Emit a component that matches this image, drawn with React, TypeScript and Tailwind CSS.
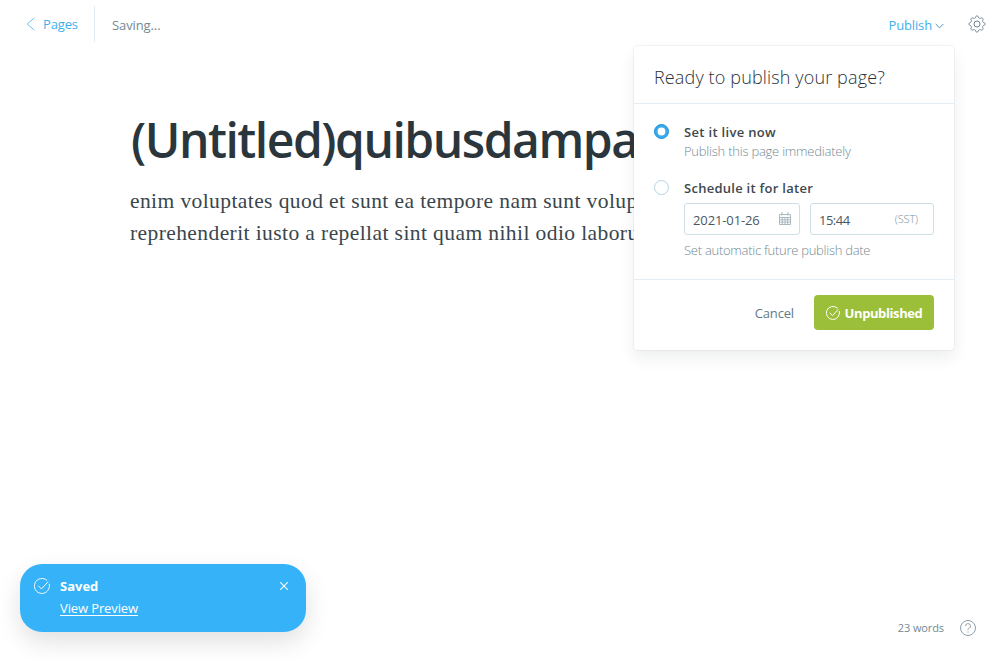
import type { ReactNode } from "react";

function CheckCircle({ className }: { className: string }) {
  return (
    <svg viewBox="0 0 24 24" fill="none" stroke="currentColor" strokeLinecap="round" strokeLinejoin="round" className={className}>
      <path d="M6.8 12l4.4 4.4L20.8 6" />
      <path d="M19.4 3.4A11.3 11.3 0 1 0 22.9 9.2" />
    </svg>
  );
}

const gearOutline = Array.from({ length: 128 }, (_, i) => {
  const angle = (i / 128) * Math.PI * 2;
  const radius = 7.1 + 0.9 * Math.tanh(2 * Math.cos(angle * 8));
  return `${(9 + radius * Math.sin(angle)).toFixed(2)},${(9 - radius * Math.cos(angle)).toFixed(2)}`;
}).join(" ");

function Gear() {
  return (
    <svg viewBox="0 0 18 18" fill="none" stroke="#6f8793" strokeLinejoin="round" className="size-[18px] shrink-0">
      <polygon points={gearOutline} />
      <circle cx="9" cy="9" r="3" />
    </svg>
  );
}

function Calendar() {
  return (
    <svg viewBox="0 0 12 13" fill="none" stroke="#a3b3bb" className="mb-px h-[13px] w-3">
      <path d="M.5 2.5h11v10H.5zM.5 5.5h11M.5 7.8h11M.5 10.1h11M3.3 5v7.5M6 5v7.5M8.7 5v7.5M3 0v3.5M9 0v3.5" strokeWidth="0.9" />
    </svg>
  );
}

function Radio({ checked }: { checked?: boolean }) {
  return (
    <svg viewBox="0 0 15 15" className="mt-0.5 mr-[15px] size-[15px] shrink-0">
      {checked ? (
        <>
          <circle cx="7.5" cy="7.5" r="7" fill="#3aa9e9" stroke="#1c95dc" />
          <circle cx="7.5" cy="7.5" r="3.9" fill="white" />
        </>
      ) : (
        <circle cx="7.5" cy="7.5" r="7" fill="white" stroke="#b4d3e5" />
      )}
    </svg>
  );
}

function Input({ children, className }: { children: ReactNode; className: string }) {
  return (
    <div className={`flex h-8 items-center justify-between rounded-[3px] border border-[#cfdfe8] pl-2 text-[13px] text-[#4c585f] ${className}`}>
      {children}
    </div>
  );
}

function PublishMenu() {
  return (
    <div className="absolute top-[46px] left-[634px] h-[304px] w-80 rounded-[4px] bg-white shadow-[0_0_0_1px_rgba(99,114,130,0.08),0_8px_16px_rgba(27,39,51,0.08)]">
      <div className="flex h-[58px] items-center border-b border-[#e3edf3] px-5 pt-1">
        <h2 className="text-[18px] leading-6 font-[350] tracking-[0.14px] whitespace-nowrap text-[#28343a]">Ready to publish your page?</h2>
      </div>
      <div className="h-[176px] border-b border-[#e3edf3] px-5 pt-[18px]">
        <div className="flex h-14">
          <Radio checked />
          <div className="whitespace-nowrap">
            <div className="text-[13px] leading-5 font-semibold tracking-[0.32px] text-[#3d484e]">Set it live now</div>
            <div className="text-[13px] leading-[18px] font-[350] tracking-[-0.23px] text-[#738a94]">Publish this page immediately</div>
          </div>
        </div>
        <div className="flex">
          <Radio />
          <div className="whitespace-nowrap">
            <div className="text-[13px] leading-5 font-semibold tracking-[0.27px] text-[#3d484e]">Schedule it for later</div>
            <div className="mt-[5px] flex gap-2.5">
              <Input className="w-[116px] pr-2">
                <span className="pt-[3px] tracking-[-0.12px]">2021-01-26</span>
                <Calendar />
              </Input>
              <Input className="w-[124px] pr-[15px]">
                <span className="pt-[3px] tracking-[-0.5px]">15:44</span>
                <span className="text-[11px] font-light tracking-[-0.1px] text-[#7c929d]">(SST)</span>
              </Input>
            </div>
            <div className="mt-1.5 text-[13px] leading-[18px] font-[350] tracking-[-0.27px] text-[#738a94]">Set automatic future publish date</div>
          </div>
        </div>
      </div>
      <div className="flex items-center justify-end gap-5 pt-[15px] pr-5">
        <span className="pt-0.5 text-[13px] tracking-[-0.15px] text-[#647984]">Cancel</span>
        <button className="flex h-[35px] w-[120px] items-center justify-center gap-[5px] rounded-[4px] bg-[#9bbf38] text-[13px] font-bold text-white">
          <CheckCircle className="size-3.5 stroke-[1.7]" />
          <span className="pt-0.5 tracking-[-0.4px]">Unpublished</span>
        </button>
      </div>
    </div>
  );
}

export default function App() {
  return (
    <div className="relative flex h-[660px] w-[1000px] flex-col overflow-hidden bg-white font-['Open_Sans','Noto_Sans',sans-serif]">
      <header className="flex h-12 shrink-0 items-center text-[13px]">
        <div className="flex h-9 w-[95px] items-center border-r border-[#dfebf2] pl-[26px] text-[#3eb0ef]">
          <svg viewBox="0 0 9 14" fill="none" stroke="currentColor" className="mr-2 h-3.5 w-[9px]">
            <path d="M8.2 1L1.2 7l7 6" strokeWidth="0.8" />
          </svg>
          <span className="pt-0.5 tracking-[-0.15px]">Pages</span>
        </div>
        <span className="ml-[17px] pt-1 tracking-[-0.1px] text-[#738a94]">Saving...</span>
        <div className="mr-3.5 ml-auto flex items-center">
          <span className="pt-1 tracking-[-0.15px] text-[#3eb0ef]">Publish</span>
          <svg viewBox="0 0 9 6" fill="none" stroke="#4f8fb5" className="mt-1 mr-6 ml-[3px] h-1.5 w-[9px]">
            <path d="M.7 1l3.8 3.8L8.3 1" />
          </svg>
          <Gear />
        </div>
      </header>
      <main className="px-[130px] pt-[60px] whitespace-nowrap">
        <h1 className="pl-px text-[48px] leading-[64px] font-semibold tracking-[-1.48px] text-[#2b363c]">(Untitled)quibusdampa</h1>
        <div className="mt-[13px] font-['Liberation_Serif',serif] text-[21.5px] leading-8 text-[#3a464c]">
          <p className="tracking-[0.41px]">enim voluptates quod et sunt ea tempore nam sunt volup</p>
          <p className="tracking-[0.41px]">reprehenderit iusto a repellat sint quam nihil odio laboru</p>
        </div>
      </main>
      <footer className="mt-auto mr-6 mb-6 flex items-center justify-end gap-4 text-[11px] text-[#738a94]">
        <span className="tracking-[-0.1px]">23 words</span>
        <svg viewBox="0 0 16 16" fill="none" stroke="#7f949e" className="size-4">
          <circle cx="8" cy="8" r="7.5" strokeWidth="0.9" />
          <path d="M5.5 6.2a2.5 2.5 0 1 1 3.7 2.1c-.9.5-1.2.8-1.2 1.7M8 11.5v1.2" strokeWidth="0.9" />
        </svg>
      </footer>
      <PublishMenu />
      <aside className="absolute bottom-7 left-5 flex h-[68px] w-[286px] rounded-[22px] bg-[#36b2f9] pt-3 pl-3.5 text-[13px] text-white shadow-[0_10px_24px_rgba(0,0,0,0.12)]">
        <CheckCircle className="mt-0.5 size-4 stroke-[1.4]" />
        <div className="ml-2.5 leading-[22px] whitespace-nowrap">
          <div className="-mt-px font-bold">Saved</div>
          <div className="tracking-[-0.12px] underline decoration-1 underline-offset-2">View Preview</div>
        </div>
        <svg viewBox="0 0 8 8" stroke="white" className="mt-1.5 mr-[18px] ml-auto size-2">
          <path d="M.3.3l7.4 7.4M7.7.3L.3 7.7" strokeWidth="1.1" />
        </svg>
      </aside>
    </div>
  );
}
